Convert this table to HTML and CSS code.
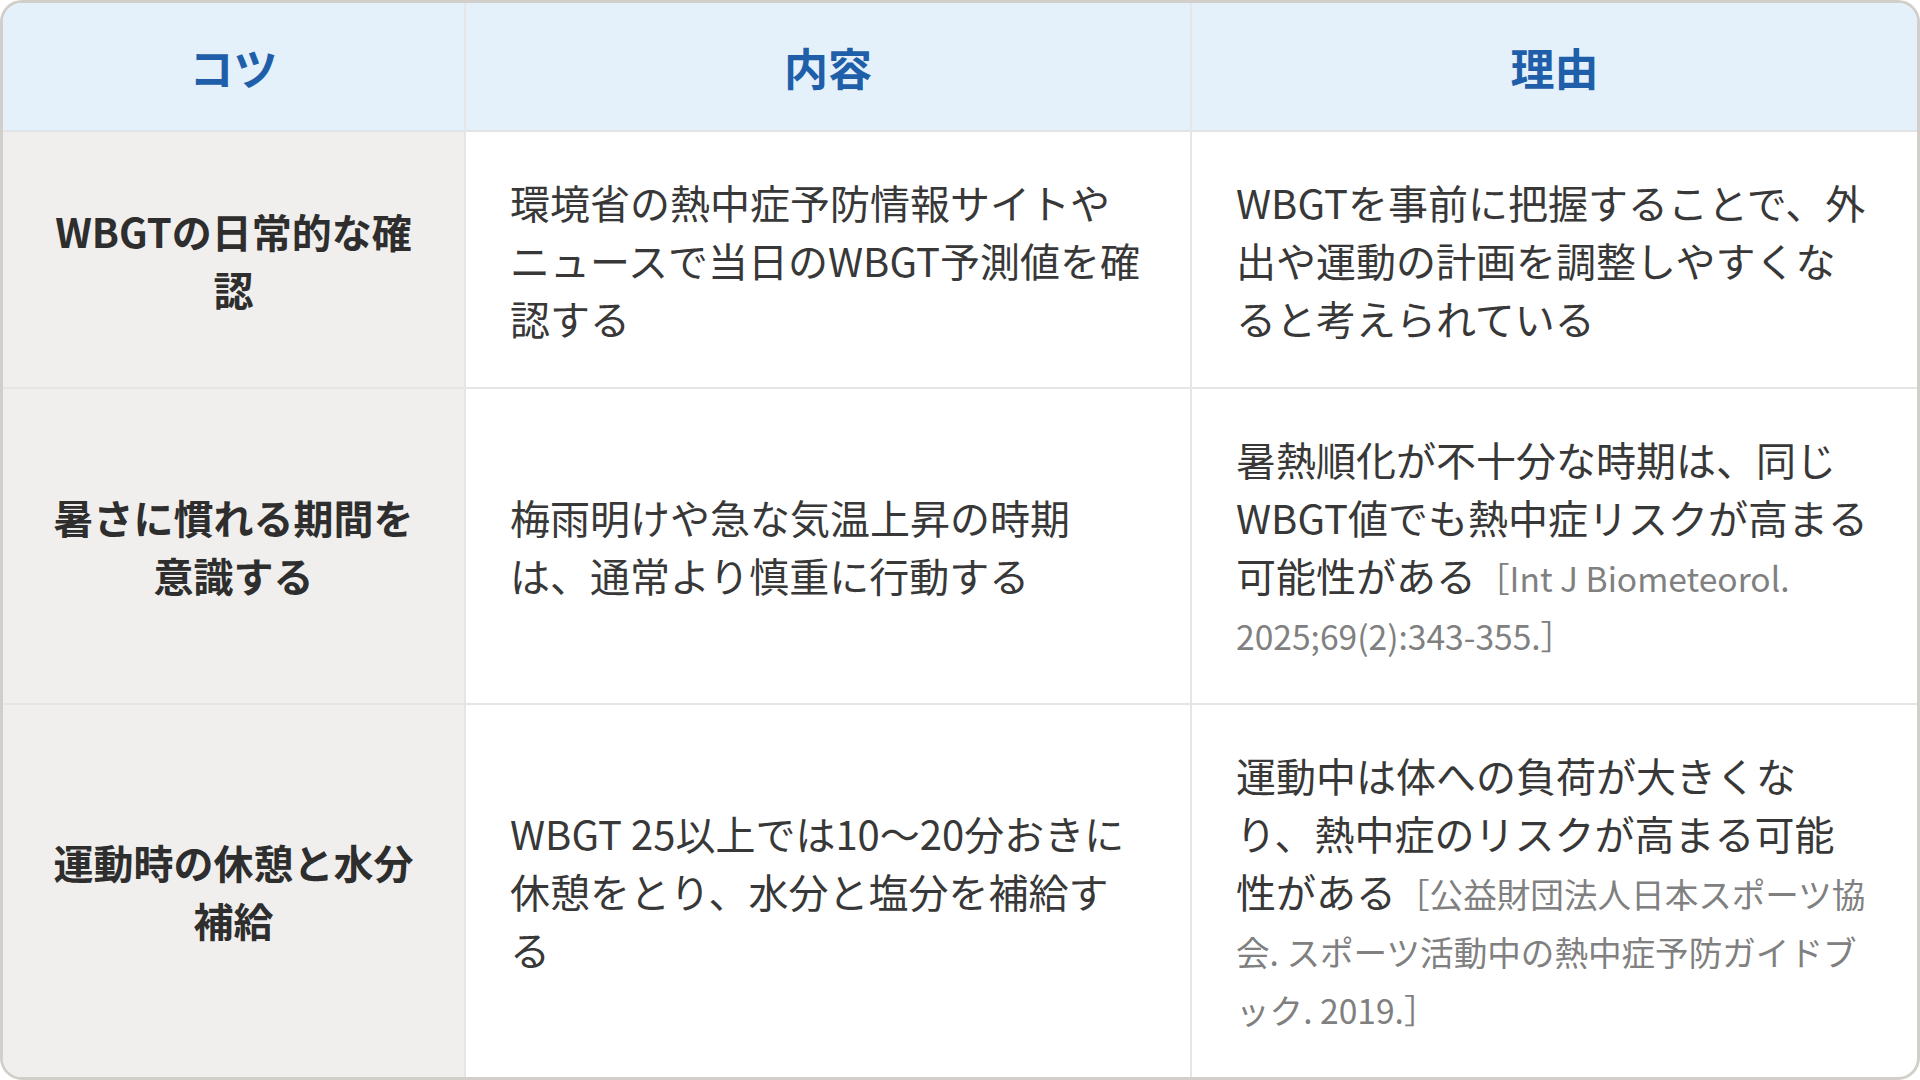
FILE: index.html
```html
<!DOCTYPE html>
<html lang="ja">
<head>
<meta charset="utf-8">
<title>熱中症予防のコツ</title>
<link rel="stylesheet" href="styles.css">
</head>
<body>
<div class="card">
  <table class="tips">
    <colgroup>
      <col class="c1">
      <col class="c2">
      <col class="c3">
    </colgroup>
    <thead>
      <tr>
        <th class="h1">コツ</th>
        <th>内容</th>
        <th>理由</th>
      </tr>
    </thead>
    <tbody>
      <tr>
        <td class="tip">WBGTの日常的な確認</td>
        <td>環境省の熱中症予防情報サイトやニュースで当日のWBGT予測値を確認する</td>
        <td>WBGTを事前に把握することで、外出や運動の計画を調整しやすくなると考えられている</td>
      </tr>
      <tr>
        <td class="tip">暑さに慣れる期間を意識する</td>
        <td>梅雨明けや急な気温上昇の時期は、通常より慎重に行動する</td>
        <td>暑熱順化が不十分な時期は、同じWBGT値でも熱中症リスクが高まる可能性がある<span class="cite">［Int J Biometeorol. 2025;69(2):343-355.］</span></td>
      </tr>
      <tr class="last">
        <td class="tip">運動時の休憩と水分補給</td>
        <td>WBGT 25以上では10〜20分おきに休憩をとり、水分と塩分を補給する</td>
        <td>運動中は体への負荷が大きくなり、熱中症のリスクが高まる可能性がある<span class="cite">［公益財団法人日本スポーツ協会. スポーツ活動中の熱中症予防ガイドブック. 2019.］</span></td>
      </tr>
    </tbody>
  </table>
</div>
</body>
</html>
```

FILE: styles.css
```css
* {
  box-sizing: border-box;
}

html,
body {
  margin: 0;
  padding: 0;
  background: #ffffff;
}

body {
  font-family: "Noto Sans CJK JP", "Noto Sans", sans-serif;
  color: #333333;
  overflow: hidden;
}

.card {
  width: 1920px;
  height: 1080px;
  border: 3px solid #d2cec9;
  border-radius: 22px;
  overflow: hidden;
  background: #ffffff;
}

.tips {
  width: 100%;
  height: 100%;
  border-collapse: separate;
  border-spacing: 0;
  table-layout: fixed;
}

.c1 {
  width: 461px;
}

.c2 {
  width: 726px;
}

.c3 {
  width: 727px;
}

.tips th {
  background: #e4f1fb;
  color: #1f5fa9;
  font-size: 44px;
  font-weight: 700;
  line-height: 58px;
  padding: 35px 44px 34px;
  text-align: center;
  border-bottom: 2px solid #e2e4e6;
  border-left: 2px solid #e6e7e8;
}

.tips th.h1 {
  border-left: none;
}

.tips td {
  font-size: 40px;
  font-weight: 400;
  line-height: 58px;
  padding: 40px 44px;
  vertical-align: middle;
  text-align: left;
  border-bottom: 2px solid #e5e5e5;
  border-left: 2px solid #e5e5e5;
  color: #383838;
}

.tips tr.last td {
  border-bottom: none;
}

.tips td.tip {
  background: #f0efed;
  font-weight: 700;
  text-align: center;
  border-left: none;
  color: #2e2e2e;
}

.cite {
  font-size: 33.6px;
  line-height: 1;
  color: #808080;
}
```
